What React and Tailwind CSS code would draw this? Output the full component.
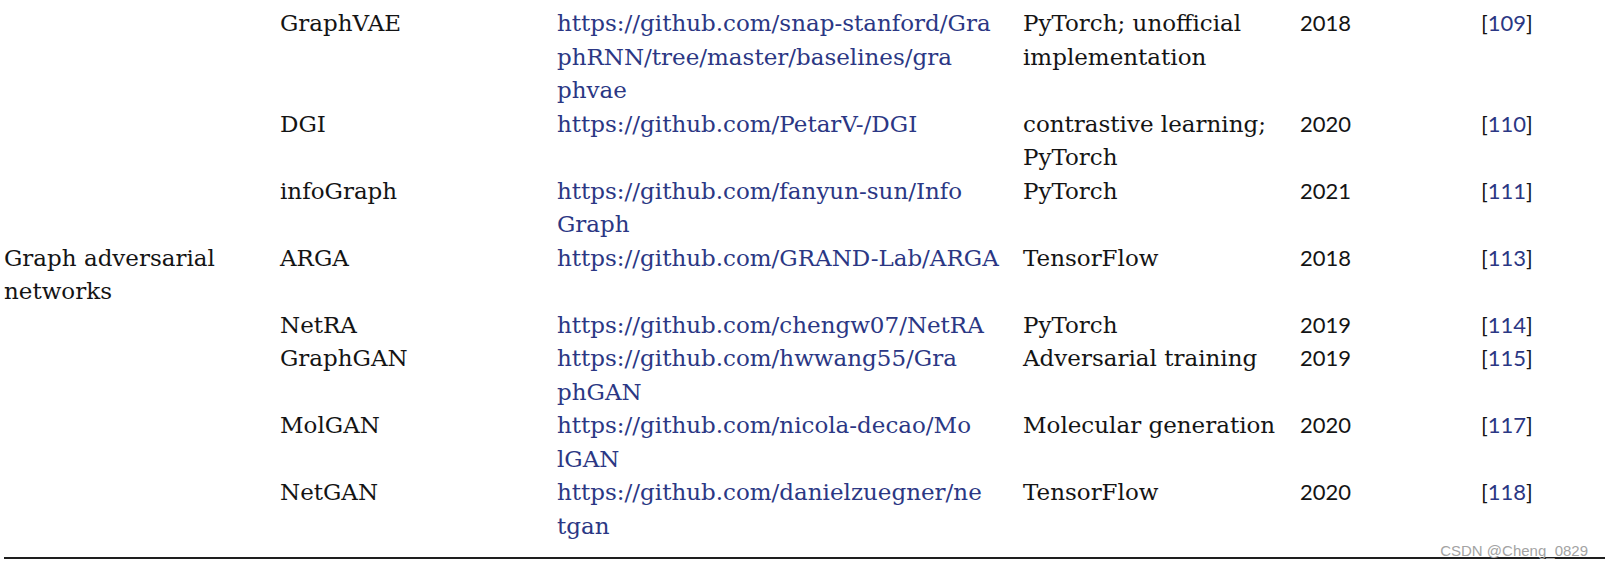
const rows = [
  { cat: [], name: "GraphVAE", url: ["https://github.com/snap-stanford/Gra", "phRNN/tree/master/baselines/gra", "phvae"], note: ["PyTorch; unofficial", "implementation"], year: "2018", ref: "109" },
  { cat: [], name: "DGI", url: ["https://github.com/PetarV-/DGI"], note: ["contrastive learning;", "PyTorch"], year: "2020", ref: "110" },
  { cat: [], name: "infoGraph", url: ["https://github.com/fanyun-sun/Info", "Graph"], note: ["PyTorch"], year: "2021", ref: "111" },
  { cat: ["Graph adversarial", "networks"], name: "ARGA", url: ["https://github.com/GRAND-Lab/ARGA"], note: ["TensorFlow"], year: "2018", ref: "113" },
  { cat: [], name: "NetRA", url: ["https://github.com/chengw07/NetRA"], note: ["PyTorch"], year: "2019", ref: "114" },
  { cat: [], name: "GraphGAN", url: ["https://github.com/hwwang55/Gra", "phGAN"], note: ["Adversarial training"], year: "2019", ref: "115" },
  { cat: [], name: "MolGAN", url: ["https://github.com/nicola-decao/Mo", "lGAN"], note: ["Molecular generation"], year: "2020", ref: "117" },
  { cat: [], name: "NetGAN", url: ["https://github.com/danielzuegner/ne", "tgan"], note: ["TensorFlow"], year: "2020", ref: "118" },
];

function Lines({ lines }) {
  return lines.map((l, i) => (
    <span key={i} className="block whitespace-nowrap">
      {l}
    </span>
  ));
}

export default function App() {
  return (
    <div className="relative h-[569px] w-[1605px] overflow-hidden bg-white pt-[7px] text-[#141414]">
      <div className="pl-[4px] font-['DejaVu_Serif',serif] text-[23px] leading-[33.5px]">
        {rows.map((row) => (
          <div key={row.name} className="grid grid-cols-[276px_277px_466px_277px_181px_1fr] items-start">
            <div>
              <Lines lines={row.cat} />
            </div>
            <div>{row.name}</div>
            <div className="text-[#2b3784]">
              <Lines lines={row.url} />
            </div>
            <div>
              <Lines lines={row.note} />
            </div>
            <div className="font-['Lato',sans-serif] text-[22px] leading-[31.5px]">{row.year}</div>
            <div className="font-['Lato',sans-serif] text-[22px] leading-[31.5px]">
              [<span className="text-[#2b3784]">{row.ref}</span>]
            </div>
          </div>
        ))}
      </div>
      <div className="mt-[14px] ml-[4px] border-t-2 border-[#1e1e1e]" />
      <span className="absolute right-[17px] top-[543px] font-['Liberation_Sans',sans-serif] text-[15px] leading-[16px] text-[#a3a3a3]">
        CSDN @Cheng_0829
      </span>
    </div>
  );
}
